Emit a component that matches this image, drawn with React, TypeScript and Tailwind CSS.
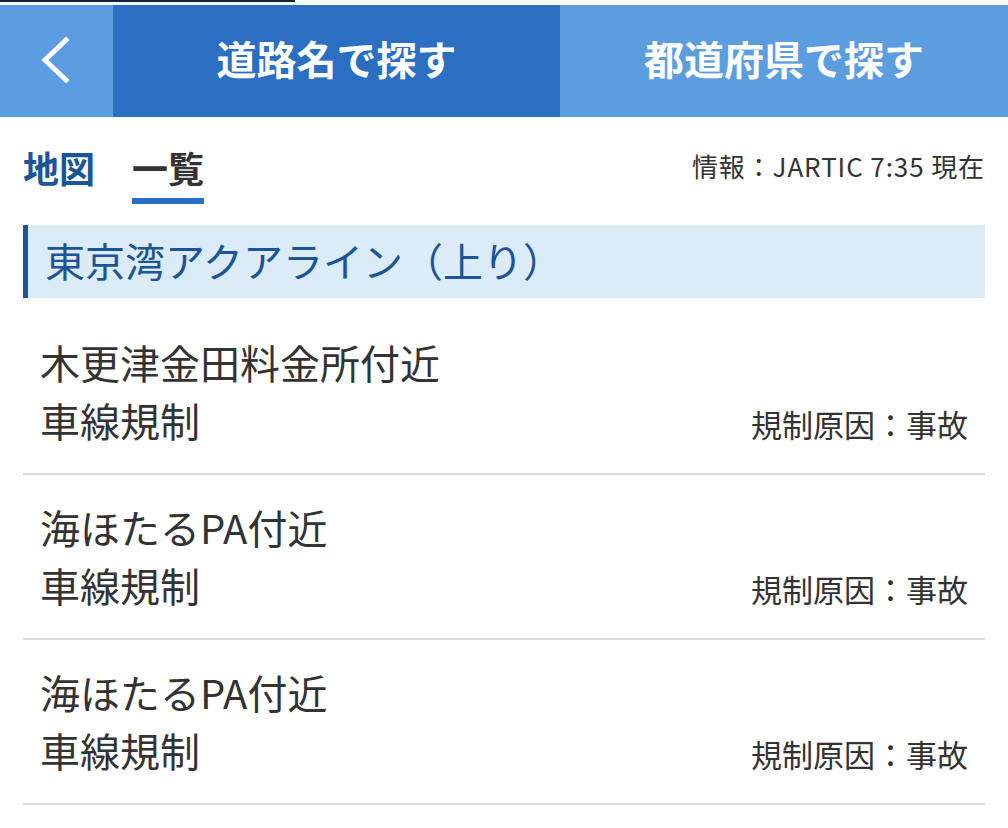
import React from "react";

const items = [
  { place: "木更津金田料金所付近", type: "車線規制", cause: "規制原因：事故" },
  { place: "海ほたるPA付近", type: "車線規制", cause: "規制原因：事故" },
  { place: "海ほたるPA付近", type: "車線規制", cause: "規制原因：事故" },
];

function BackIcon() {
  return (
    <svg width="36" height="50" viewBox="0 0 36 50" fill="none">
      <path
        d="M28 5 L7 25 L28 45"
        stroke="white"
        strokeWidth="5"
        strokeLinecap="square"
        strokeLinejoin="miter"
      />
    </svg>
  );
}

export default function App() {
  return (
    <div
      className="w-[1008px] h-[828px] overflow-hidden bg-white text-[#333333]"
      style={{ fontFamily: '"Noto Sans CJK JP", "Noto Sans", sans-serif' }}
    >
      {/* top progress strip */}
      <div className="h-[5px] bg-[#f6f8f8]">
        <div className="w-[295px] h-[2px] bg-[#14232f]" />
      </div>

      {/* Header */}
      <div className="flex h-[112px]">
        <button className="w-[113px] shrink-0 flex items-center justify-center bg-[#5b9de0] pr-[2px] pb-[2px]">
          <BackIcon />
        </button>
        <div className="flex-1 flex items-center justify-center bg-[#2a6fc2] text-white text-[40px] font-bold leading-none pb-[6px]">
          道路名で探す
        </div>
        <div className="w-[448px] flex items-center justify-center bg-[#5b9ddf] text-white text-[40px] font-bold leading-none pb-[6px]">
          都道府県で探す
        </div>
      </div>

      {/* Tabs row */}
      <div className="px-[23px] pt-[28px] flex items-start justify-between h-[108px]">
        <div className="flex gap-[37px]">
          <div className="text-[36px] font-bold leading-[44px] text-[#1b5596]">地図</div>
          <div className="flex flex-col">
            <div className="text-[36px] font-bold leading-[44px] text-[#333333]">一覧</div>
            <div className="mt-[9px] h-[6px] bg-[#2a6fc2]" />
          </div>
        </div>
        <div className="text-[26px] leading-[40px] text-[#333333] mt-[1px] tracking-[0.9px]">
          情報：JARTIC 7:35 現在
        </div>
      </div>

      {/* Section header */}
      <div className="mx-[23px] h-[73px] flex items-center bg-[#dcebf8] border-l-[5px] border-[#1b5596] pl-[17px] pb-[4px]">
        <span className="text-[40px] leading-none text-[#1b5596]">東京湾アクアライン（上り）</span>
      </div>

      {/* List */}
      <div className="mx-[23px] mt-[12px]">
        {items.map((item, i) => (
          <div key={i} className="px-[17px] pt-[23px] pb-[24px] border-b-2 border-[#dddddd]">
            <div className="text-[40px] leading-[58px]">{item.place}</div>
            <div className="flex items-baseline justify-between h-[58px]">
              <span className="text-[40px] leading-[58px]">{item.type}</span>
              <span className="text-[31px] leading-[40px]">{item.cause}</span>
            </div>
          </div>
        ))}
      </div>
    </div>
  );
}
